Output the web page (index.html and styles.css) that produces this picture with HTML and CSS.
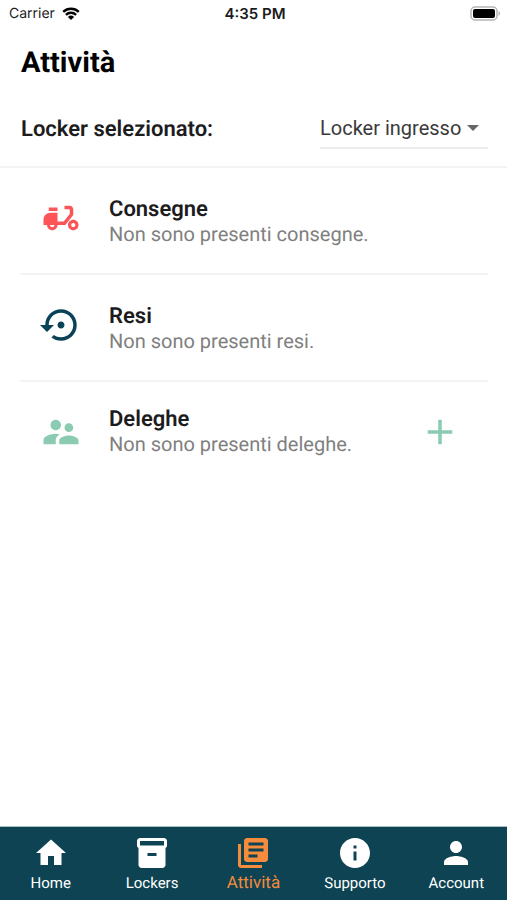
FILE: index.html
```html
<!DOCTYPE html>
<html lang="it">
<head>
  <meta charset="utf-8">
  <meta name="viewport" content="width=device-width, initial-scale=1">
  <title>Attività</title>
  <link rel="stylesheet" href="styles.css">
</head>
<body>
  <div class="status">
    <div class="status-side">
      <span>Carrier</span>
      <svg class="wifi" viewBox="0 0 18 13" aria-hidden="true">
        <path d="M1.2 4.9a11.4 11.4 0 0 1 15.6 0M3.9 7.8a7.4 7.4 0 0 1 10.2 0" fill="none" stroke="currentColor" stroke-width="2.4"/>
        <path d="M9 13 5.9 9.9a4.5 4.5 0 0 1 6.2 0z" fill="currentColor"/>
      </svg>
    </div>
    <div class="status-time">4:35 PM</div>
    <div class="status-side status-end">
      <svg class="battery" viewBox="0 0 31 15" aria-hidden="true">
        <rect x="1" y="1" width="26" height="13" rx="4" fill="#fff" stroke="#b5b5b5" stroke-width="1.5"/>
        <rect x="3" y="3" width="22" height="9" rx="2" fill="#000"/>
        <path d="M28.5 5c2 .8 2 4.200 0 5z" fill="#b5b5b5"/>
      </svg>
    </div>
  </div>

  <header class="header">
    <h1>Attività</h1>
    <div class="picker">
      <label for="locker">Locker selezionato:</label>
      <div class="select">
        <select id="locker"><option>Locker ingresso</option></select>
        <svg class="caret" viewBox="0 0 12 6" aria-hidden="true"><path d="M0 0h12L6 6z" fill="currentColor"/></svg>
      </div>
    </div>
  </header>

  <main class="list">
    <section class="row">
      <svg class="icon red" viewBox="0 0 24 24" aria-hidden="true"><path fill-rule="evenodd" d="M19 7c0-1.100-.9-2-2-2h-3v2h3v2.650L13.520 14H10V9H6c-2.210 0-4 1.790-4 4v3h2c0 1.660 1.340 3 3 3s3-1.340 3-3h4.480L19 10.350V7zM7 17.300c-.7 0-1.300-.6-1.300-1.300h2.600c0 .7-.6 1.300-1.300 1.300zM5 6h5v2H5zM19 13c-1.660 0-3 1.340-3 3s1.340 3 3 3 3-1.340 3-3-1.340-3-3-3zm0 4.200c-.66 0-1.200-.54-1.200-1.200s.54-1.200 1.200-1.200 1.200.54 1.200 1.200-.54 1.200-1.200 1.200z"/></svg>
      <div class="text"><h2>Consegne</h2><p>Non sono presenti consegne.</p></div>
    </section>
    <section class="row">
      <svg class="icon navy" viewBox="0 0 24 24" aria-hidden="true"><path d="M14 12c0-1.100-.9-2-2-2s-2 .9-2 2 .9 2 2 2 2-.9 2-2zm-2-9c-4.970 0-9 4.030-9 9H0l4 4 4-4H5c0-3.870 3.130-7 7-7s7 3.130 7 7-3.130 7-7 7c-1.510 0-2.910-.49-4.060-1.300l-1.420 1.440C8.040 20.300 9.940 21 12 21c4.970 0 9-4.030 9-9s-4.030-9-9-9z"/></svg>
      <div class="text"><h2>Resi</h2><p>Non sono presenti resi.</p></div>
    </section>
    <section class="row row-action">
      <svg class="icon green" viewBox="0 0 24 24" aria-hidden="true"><path d="M16.500 12c1.380 0 2.490-1.120 2.490-2.500S17.880 7 16.500 7 14 8.120 14 9.500s1.120 2.500 2.500 2.500zM9 11c1.660 0 2.990-1.340 2.990-3S10.660 5 9 5 6 6.340 6 8s1.340 3 3 3zm7.500 3c-1.830 0-5.500.92-5.500 2.750V19h11v-2.250c0-1.830-3.670-2.750-5.500-2.750zM9 13c-2.330 0-7 1.170-7 3.500V19h7v-2.250c0-.85.33-2.340 2.370-3.470C10.500 13.100 9.660 13 9 13z"/></svg>
      <div class="text"><h2>Deleghe</h2><p>Non sono presenti deleghe.</p></div>
      <button class="add green" type="button" aria-label="Aggiungi delega">
        <svg class="icon" viewBox="0 0 24 24" aria-hidden="true"><path d="M19 13h-6v6h-2v-6H5v-2h6V5h2v6h6v2z"/></svg>
      </button>
    </section>
  </main>

  <nav class="tabs">
    <a href="#home"><svg viewBox="0 0 24 24" aria-hidden="true"><path d="M10 20v-6h4v6h5v-8h3L12 3 2 12h3v8z"/></svg><span>Home</span></a>
    <a href="#lockers"><svg viewBox="0 0 24 24" aria-hidden="true"><path fill-rule="evenodd" d="M20 2H4c-1 0-2 .9-2 2v3.010c0 .72.43 1.340 1 1.690V20c0 1.100 1.100 2 2 2h14c.9 0 2-.9 2-2V8.700c.57-.35 1-.97 1-1.690V4c0-1.100-1-2-2-2zm-5 12H9v-2h6v2zm5-7H4V4h16v3z"/></svg><span>Lockers</span></a>
    <a class="active" href="#attivita" aria-current="page"><svg viewBox="0 0 24 24" aria-hidden="true"><path d="M4 6H2v14c0 1.100.9 2 2 2h14v-2H4V6zm16-4H8c-1.100 0-2 .9-2 2v12c0 1.100.9 2 2 2h12c1.100 0 2-.9 2-2V4c0-1.100-.9-2-2-2zm-1 9H9V9h10v2zm-4 4H9v-2h6v2zm4-8H9V5h10v2z"/></svg><span>Attività</span></a>
    <a href="#supporto"><svg viewBox="0 0 24 24" aria-hidden="true"><path d="M12 2C6.480 2 2 6.480 2 12s4.480 10 10 10 10-4.480 10-10S17.520 2 12 2zm1 15h-2v-6h2v6zm0-8h-2V7h2v2z"/></svg><span>Supporto</span></a>
    <a href="#account"><svg viewBox="0 0 24 24" aria-hidden="true"><path d="M12 12c2.210 0 4-1.790 4-4s-1.790-4-4-4-4 1.790-4 4 1.790 4 4 4zm0 2c-2.670 0-8 1.340-8 4v2h16v-2c0-2.660-5.330-4-8-4z"/></svg><span>Account</span></a>
  </nav>
</body>
</html>
```
FILE: styles.css
```css
* { box-sizing: border-box; }

body {
  display: flex;
  flex-direction: column;
  min-height: 100vh;
  margin: 0;
  background: #fff;
  color: #1c1c1e;
  font-family: Roboto, sans-serif;
  text-rendering: geometricPrecision;
}

h1, h2, p { margin: 0; }

svg { display: block; fill: currentColor; }

.status {
  display: flex;
  align-items: center;
  height: 26px;
  padding: 0 6px 0 9px;
  font: 14px Inter, sans-serif;
}
.status-side { display: flex; flex: 1; align-items: center; gap: 7px; }
.status-end { justify-content: flex-end; }
.status-time { font-size: 15px; font-weight: 600; }
.wifi { width: 18px; height: 13px; color: #000; }
.battery { width: 31px; height: 15px; }

.header {
  padding: 19px 19px 17px 21px;
  border-bottom: 2px solid #f3f3f3;
}
h1 {
  color: #000;
  font-size: 29px;
  font-weight: 700;
  line-height: 36px;
}
.picker {
  display: flex;
  align-items: center;
  justify-content: space-between;
  margin-top: 28px;
}
.picker label { font-size: 22px; font-weight: 600; }
.select {
  display: flex;
  align-items: center;
  width: 168px;
  height: 40px;
  border-bottom: 2px solid #ececec;
}
select {
  flex: 1;
  min-width: 0;
  height: 100%;
  padding: 0;
  border: 0;
  appearance: none;
  background: none;
  color: #3a3a3a;
  font: 20px Roboto, sans-serif;
}
.caret { width: 12px; height: 6px; margin-right: 9px; color: #666; }

.list { flex: 1; padding: 0 19px 0 20px; }
.row {
  display: flex;
  align-items: flex-start;
  gap: 27px;
  padding: 29px 20px 26px;
  border-bottom: 2px solid #f3f3f3;
}
.row-action {
  align-items: center;
  padding: 25px 27px 25px 20px;
  border-bottom: 0;
}
.icon { flex: none; width: 42px; height: 42px; }
.text { flex: 1; line-height: 25px; }
h2 { font-size: 22px; font-weight: 600; line-height: 25px; }
.text p { color: #808080; font-size: 20px; }
.red { color: #fb5558; }
.navy { color: #0b4356; }
.green { color: #8bcbb2; }
.add { padding: 0; border: 0; background: none; }

.tabs {
  display: grid;
  grid-template-columns: repeat(5, 1fr);
  height: 74px;
  border-top: 1px solid #a9bfc4;
  background: #0d4352;
}
.tabs a {
  display: flex;
  flex-direction: column;
  align-items: center;
  gap: 3px;
  padding-top: 8px;
  color: #fff;
  font-size: 15px;
  line-height: 18px;
  text-decoration: none;
}
.tabs svg { width: 36px; height: 36px; }
.tabs .active { color: #f58b3c; font-size: 17px; }
```
